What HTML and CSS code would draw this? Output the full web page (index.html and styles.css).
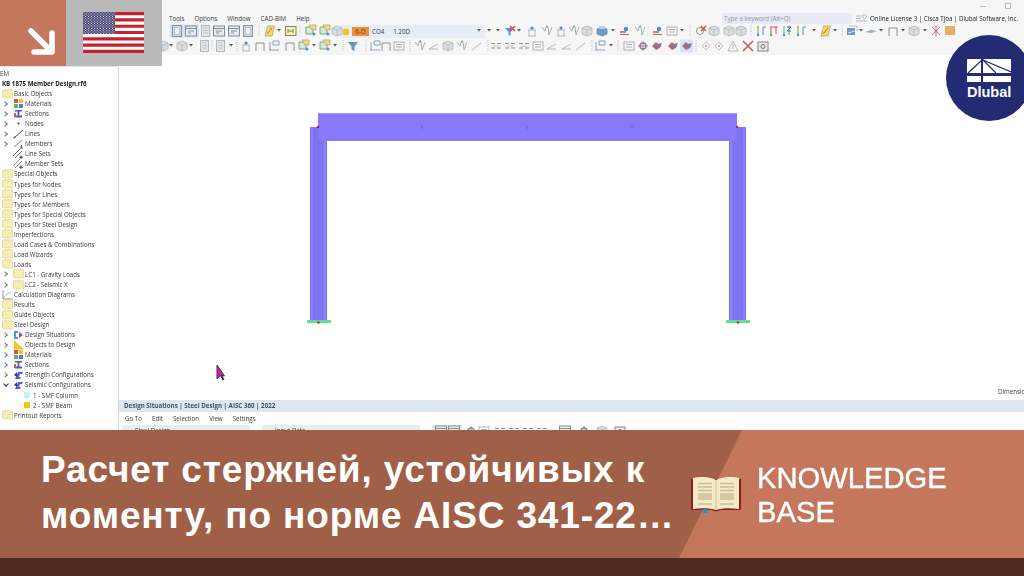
FILE: index.html
```html
<!DOCTYPE html>
<html lang="en">
<head>
    <meta charset="UTF-8">
    <meta name="viewport" content="width=device-width, initial-scale=1.0">
    <title>Knowledge Base</title>
    <link rel="stylesheet" href="styles.css">
</head>
<body>
    <svg class="defs" width="0" height="0">
        <defs>
            <pattern id="stars" width="3" height="2.4" patternUnits="userSpaceOnUse">
                <circle cx="1" cy="0.8" r="0.55" fill="#fff"/>
                <circle cx="2.5" cy="2" r="0.55" fill="#fff"/>
            </pattern>
            <g id="folder"><rect x="0.5" y="0.8" width="10.5" height="8" rx="1.2" fill="#f6edb0" stroke="#dcd08e" stroke-width="0.7"/></g>
            <g id="materials"><rect x="1" y="0" width="4" height="4" fill="#d9534f"/><rect x="6" y="0" width="4" height="4" fill="#f0c419"/><rect x="1" y="5" width="4" height="4" fill="#5cb85c"/><rect x="6" y="5" width="4" height="4" fill="#6a6fd8"/></g>
            <g id="sections"><path d="M2 1h7v1.6H6.4v4H9v1.8H2V6.6h2.6v-4H2z" fill="#5358b8"/><path d="M1 4h2v4H1z" fill="#d9534f"/></g>
            <g id="node"><circle cx="5.5" cy="4.5" r="1.1" fill="#8a2040"/></g>
            <g id="line"><path d="M1 9L10 1" stroke="#444" stroke-width="1"/><circle cx="1.5" cy="8.5" r="1" fill="#b0304a"/></g>
            <g id="member"><path d="M1 8L9 1" stroke="#4a9a9a" stroke-width="1"/><path d="M7 9h3M8.5 6v3" stroke="#444" stroke-width="0.9"/></g>
            <g id="lineset"><path d="M0 7L7 0M2 9L9 2" stroke="#555" stroke-width="0.9"/><path d="M8 6.5v3.5M6.2 8.2h3.6" stroke="#222" stroke-width="0.9"/></g>
            <g id="memberset"><path d="M0 7L7 0" stroke="#c06070" stroke-width="0.9"/><path d="M2 9L9 2" stroke="#666" stroke-width="0.9"/><path d="M8 6.5v3.5M6.2 8.2h3.6" stroke="#222" stroke-width="0.9"/></g>
            <g id="calc"><path d="M1 0v9h10" fill="none" stroke="#777" stroke-width="0.8"/><path d="M2 7l3-3 4-2" fill="none" stroke="#8fb0d0" stroke-width="0.7"/></g>
            <g id="design"><path d="M1 1h4v2H3v4h2v2H1z" fill="#3aa6d8"/><path d="M6 2l4 3-4 3z" fill="#c030c0"/></g>
            <g id="objects"><path d="M1 9.5V0l10 9.5z" fill="#efc92e"/></g>
            <g id="strength"><path d="M2 9l3-7h5l-1 2H7L6 7h2L7 9z" fill="#5a62c8"/><path d="M1 5l3-3v5z" fill="#2f3c90"/></g>

            <path id="dd" d="M0 0h4L2 2.4z" fill="#333"/>
            <path id="sep" d="M0 0v12" stroke="#bcbcbc" stroke-width="1" stroke-dasharray="1 1"/>
            <g id="pane"><rect x="0.5" y="0.5" width="9" height="11" fill="#cfd6df" stroke="#6b7888"/><rect x="2.5" y="2.5" width="5" height="7" fill="#eef1f5" stroke="#8b97a5" stroke-width="0.6"/></g>
            <g id="win"><rect x="0.5" y="1" width="11" height="10" fill="#e6e9ee" stroke="#66727f"/><path d="M1 3.5h10" stroke="#66727f"/><path d="M3 6h6M3 8h3" stroke="#555" stroke-width="0.8"/></g>
            <g id="page"><rect x="1.5" y="0.5" width="8" height="11" fill="#dfe2e6" stroke="#a3a9b0"/><path d="M3 3h5M3 5.5h5M3 8h5" stroke="#a3a9b0" stroke-width="0.7"/></g>
            <g id="yellow"><path d="M1 11l2.5-10h7L8 11z" fill="#f2d64b" stroke="#9b8a20" stroke-width="0.7"/><path d="M3 9l5-6" stroke="#c0392b"/></g>
            <g id="box"><rect x="0.5" y="1.5" width="10.5" height="9" fill="#f5efa8" stroke="#6d6a20"/><path d="M3 4v4M3 6h5M8 4v4" stroke="#3d7a3a"/></g>
            <g id="tri"><path d="M1 2h7v7H1z" fill="#d3e6d0" stroke="#47773f" stroke-width="0.8"/><path d="M4 0h7v5H7z" fill="#e8d77a" stroke="#8a7a20" stroke-width="0.6"/><circle cx="9" cy="9" r="1.5" fill="#3a76c4"/></g>
            <g id="cube"><path d="M1 3l5-2 5 2v6l-5 2-5-2z" fill="#d5d8dc" stroke="#a2a7ad" stroke-width="0.8"/><path d="M1 3l5 2 5-2M6 5v6" fill="none" stroke="#a2a7ad" stroke-width="0.7"/></g>
            <g id="cubeb"><path d="M1 4l5-2 5 2v5l-5 2-5-2z" fill="#4f86b8" stroke="#2f5e8a" stroke-width="0.7"/><path d="M3 1h6v3H3z" fill="#a7c7e4"/></g>
            <g id="stand"><path d="M2 11h8M3 11V5M9 11V5M2 5h8" fill="none" stroke="#9aa0a6" stroke-width="0.9"/><circle cx="6" cy="3" r="1.6" fill="#2f6fa8"/></g>
            <g id="vv"><path d="M1 2l3 4 1-4M7 2l1 8 3-8" fill="none" stroke="#8c9499" stroke-width="0.9"/><circle cx="6" cy="1.5" r="1" fill="#4e8b6c"/></g>
            <g id="frame"><path d="M2 11V3h8v8" fill="none" stroke="#777" stroke-width="1"/></g>
            <g id="frameb"><path d="M1 10h10M2 10V2M5 1h6v4H5z" fill="none" stroke="#5a7fa8" stroke-width="0.9"/></g>
            <g id="hatch"><rect x="1" y="2" width="10" height="8" fill="none" stroke="#9aa0a6"/><path d="M3 4.5h6M3 7h6" stroke="#9aa0a6"/></g>
            <g id="eq"><path d="M1 3.5h4M7 3.5h4M1 8h4M7 8h4" stroke="#777" stroke-width="1.1"/><path d="M3 6h6" stroke="#b5b5b5"/></g>
            <g id="slant"><path d="M1 9l9-5M1 9h9" fill="none" stroke="#9aa0a6" stroke-width="0.9"/></g>
            <g id="dash"><path d="M1 10L10 3" stroke="#a6abb0" stroke-width="1"/></g>
            <g id="funnel"><path d="M1 2h10L7.5 6.5V11l-3-1.500V6.500z" fill="#3d7eb4"/></g>
            <g id="funnelx"><path d="M1 3h9L6.500 7v4l-2-1V7z" fill="#3d7eb4"/><path d="M6 1l5 5M11 1L6 6" stroke="#d8202a" stroke-width="1.600"/></g>
            <g id="redx"><circle cx="5" cy="6" r="3.500" fill="none" stroke="#777"/><path d="M6 1l5 5M11 1L6 6" stroke="#d8202a" stroke-width="1.500"/></g>
            <g id="bigx"><path d="M1 1l10 10M11 1L1 11" stroke="#b8322c" stroke-width="1.500"/></g>
            <g id="ax1"><path d="M3 1v10M8 2h3" stroke="#2f9a4a" stroke-width="1"/><path d="M8 2v8" stroke="#2f6fc4"/><circle cx="3" cy="2" r="1.200" fill="#d9a520"/><circle cx="3" cy="10" r="1.200" fill="#2f6fc4"/></g>
            <g id="ax2"><path d="M2 2h8M3 2v9M8 2v7" fill="none" stroke="#c0392b" stroke-width="1"/><circle cx="3" cy="10" r="1.200" fill="#2f9a4a"/></g>
            <g id="ax3"><path d="M3 1v10M8 1v9" stroke="#2f9a4a"/><path d="M6 2h4L6 6h4" fill="none" stroke="#234a90"/><circle cx="3" cy="10" r="1.200" fill="#2f6fc4"/></g>
            <g id="linkr"><path d="M1 7h6" stroke="#c0392b" stroke-width="1.600"/><circle cx="7" cy="4" r="2.200" fill="#2f6fa8"/><path d="M1 9.500h9" stroke="#b04040"/></g>
            <g id="gear"><circle cx="6" cy="6" r="3" fill="none" stroke="#3c6ea8" stroke-width="1.400"/><path d="M6 1v10M1 6h10" stroke="#c0392b" stroke-width="0.8"/></g>
            <g id="blob"><path d="M1 6l4-4 2 2 4-1-2 5-4 2z" fill="#a8434f"/><path d="M3 6h7" stroke="#2f6fa8" stroke-width="1.500"/></g>
            <g id="stack"><path d="M1 3h8v7H1z" fill="#5c7fa5"/><path d="M3 1h8v5" fill="none" stroke="#9db6cf"/><path d="M2 8l7-2" stroke="#d5e1ee"/></g>
            <g id="plane"><path d="M0 7l6-2 6 1-6 2z" fill="#7e9ab5"/></g>
            <g id="net"><path d="M2 2l8 8M10 2L2 10M6 1v10" stroke="#c05050" stroke-width="0.900"/><circle cx="6" cy="6" r="1.500" fill="#777"/></g>
            <g id="camera"><rect x="1" y="2" width="10" height="9" fill="#e4e4e4" stroke="#666"/><circle cx="6" cy="6.500" r="2" fill="none" stroke="#555"/></g>
            <g id="ghost"><path d="M2 6l4-4 4 4-4 4z" fill="none" stroke="#b5babf"/><circle cx="6" cy="6" r="1" fill="#c77"/></g>
            <g id="warn"><path d="M6 1l5 10H1z" fill="none" stroke="#a5aaaf"/><path d="M6 4v5" stroke="#a5aaaf"/></g>
        </defs>
    </svg>

    <div class="app">
        <header class="top">
            <div class="titlebar"><span class="win-min"></span><span class="win-max"></span></div>
            <div class="menubar">
                <nav class="menu">
                    <span>Tools</span><span>Options</span><span>Window</span><span>CAD-BIM</span><span>Help</span>
                </nav>
                <div class="search">Type a keyword (Alt+Q)</div>
                <svg class="search-ico" width="12" height="8" viewBox="0 0 12 8"><path d="M0 2h6M0 4.500h5M0 7h11" stroke="#a9b7c6"/><circle cx="8.500" cy="2.500" r="1.800" fill="none" stroke="#a9b7c6"/></svg>
                <div class="license">Online License 3 | Cisca Tjoa | Dlubal Software, Inc.</div>
            </div>
            <div class="tools">
                <div class="combo"><i class="swatch"></i><b class="chip">6-O</b><span>CO4</span><span class="combo-val">1.20D</span></div>
                <svg class="tool-icons" viewBox="0 25 1024 30" width="1024" height="30">
                    <rect x="170" y="25.500" width="29" height="13" fill="#cfe2f7"/>
                    <rect x="680" y="40.500" width="13" height="13" fill="#cfe2f7"/>
                    <use href="#pane" x="172" y="26"/><use href="#win" x="185" y="26"/><use href="#page" x="200" y="26"/><use href="#win" x="213" y="26"/><use href="#win" x="228" y="26"/><use href="#pane" x="243" y="26"/>
                    <use href="#sep" x="259" y="26"/>
                    <use href="#yellow" x="264" y="26"/><use href="#dd" x="277" y="30"/><use href="#box" x="285" y="26"/>
                    <use href="#sep" x="300" y="26"/>
                    <use href="#tri" x="305" y="26"/><use href="#tri" x="319" y="26"/><use href="#cube" x="331" y="26"/>
                    <use href="#dd" x="477" y="30"/><use href="#dd" x="487" y="30"/><use href="#dd" x="496" y="30"/>
                    <use href="#funnelx" x="504" y="26"/><use href="#dd" x="517" y="30"/><use href="#stand" x="526" y="26"/><use href="#vv" x="541" y="26"/><use href="#stand" x="555" y="26"/><use href="#vv" x="568" y="26"/><use href="#cube" x="581" y="26"/><use href="#cubeb" x="596" y="26"/><use href="#dd" x="611" y="30"/><use href="#linkr" x="619" y="26"/><use href="#vv" x="634" y="26"/>
                    <use href="#sep" x="648" y="26"/>
                    <use href="#linkr" x="652" y="26"/><use href="#hatch" x="666" y="26"/><use href="#dd" x="680" y="30"/>
                    <use href="#sep" x="690" y="26"/>
                    <use href="#redx" x="695" y="26"/><use href="#cube" x="708" y="26"/><use href="#cube" x="723" y="26"/><use href="#cube" x="735" y="26"/>
                    <use href="#sep" x="751" y="26"/>
                    <use href="#ax1" x="755" y="26"/><use href="#ax2" x="768" y="26"/><use href="#ax3" x="781" y="26"/><use href="#ax1" x="795" y="26"/><use href="#dd" x="812" y="30"/><use href="#yellow" x="820" y="26"/><use href="#dd" x="833" y="30"/>
                    <use href="#sep" x="842" y="26"/>
                    <use href="#stack" x="846" y="26"/><use href="#dd" x="859" y="30"/><use href="#plane" x="865" y="26"/><use href="#dd" x="879" y="30"/><use href="#frame" x="887" y="26"/><use href="#dd" x="901" y="30"/><use href="#cube" x="908" y="26"/><use href="#dd" x="923" y="30"/><use href="#net" x="930" y="26"/>
                    <rect x="945" y="27" width="10" height="9" fill="#e8993f"/>

                    <use href="#cube" x="157" y="41"/><use href="#dd" x="169" y="45"/><use href="#cube" x="176" y="41"/><use href="#dd" x="189" y="45"/><use href="#page" x="199" y="41"/><use href="#sep" x="212" y="41"/>
                    <use href="#page" x="215" y="41"/><use href="#dd" x="229" y="45"/><use href="#sep" x="237" y="41"/>
                    <use href="#stand" x="240" y="41"/><use href="#frame" x="254" y="41"/><use href="#frameb" x="268" y="41"/><use href="#frame" x="284" y="41"/><use href="#tri" x="298" y="41"/><use href="#dd" x="312" y="45"/><use href="#tri" x="319" y="41"/><use href="#dd" x="333" y="45"/>
                    <use href="#sep" x="343" y="41"/><use href="#funnel" x="347" y="41"/><use href="#sep" x="366" y="41"/>
                    <use href="#frameb" x="369" y="41"/><use href="#frame" x="380" y="41"/><use href="#hatch" x="393" y="41"/><use href="#sep" x="410" y="41"/>
                    <use href="#vv" x="414" y="41"/><use href="#slant" x="428" y="41"/><use href="#cube" x="442" y="41"/><use href="#vv" x="456" y="41"/><use href="#dash" x="471" y="41"/><use href="#sep" x="488" y="41"/>
                    <use href="#eq" x="490" y="41"/><use href="#eq" x="504" y="41"/><use href="#eq" x="518" y="41"/><use href="#hatch" x="532" y="41"/><use href="#slant" x="546" y="41"/><use href="#slant" x="561" y="41"/><use href="#dash" x="575" y="41"/><use href="#sep" x="592" y="41"/>
                    <use href="#frameb" x="594" y="41"/><use href="#dd" x="609" y="45"/><use href="#sep" x="618" y="41"/>
                    <use href="#hatch" x="623" y="41"/><use href="#gear" x="637" y="41"/><use href="#blob" x="651" y="41"/><use href="#blob" x="667" y="41"/><use href="#blob" x="681" y="41"/><use href="#sep" x="696" y="41"/>
                    <use href="#ghost" x="700" y="41"/><use href="#ghost" x="713" y="41"/><use href="#warn" x="727" y="41"/><use href="#bigx" x="742" y="41"/><use href="#camera" x="757" y="41"/>
                </svg>
            </div>
        </header>

        <div class="work">
            <aside class="tree">
                <div class="row l0 cut">EM</div>
                <div class="row l0 file">KB 1875 Member Design.rf6</div>
                <div class="row l0"><svg class="ico"><use href="#folder"/></svg>Basic Objects</div>
                <div class="row l1"><i class="twig"></i><svg class="ico"><use href="#materials"/></svg>Materials</div>
                <div class="row l1"><i class="twig"></i><svg class="ico"><use href="#sections"/></svg>Sections</div>
                <div class="row l1"><i class="twig"></i><svg class="ico"><use href="#node"/></svg>Nodes</div>
                <div class="row l1"><i class="twig"></i><svg class="ico"><use href="#line"/></svg>Lines</div>
                <div class="row l1"><i class="twig"></i><svg class="ico"><use href="#member"/></svg>Members</div>
                <div class="row l1"><i class="no-twig"></i><svg class="ico"><use href="#lineset"/></svg>Line Sets</div>
                <div class="row l1"><i class="no-twig"></i><svg class="ico"><use href="#memberset"/></svg>Member Sets</div>
                <div class="row l0"><svg class="ico"><use href="#folder"/></svg>Special Objects</div>
                <div class="row l0"><svg class="ico"><use href="#folder"/></svg>Types for Nodes</div>
                <div class="row l0"><svg class="ico"><use href="#folder"/></svg>Types for Lines</div>
                <div class="row l0"><svg class="ico"><use href="#folder"/></svg>Types for Members</div>
                <div class="row l0"><svg class="ico"><use href="#folder"/></svg>Types for Special Objects</div>
                <div class="row l0"><svg class="ico"><use href="#folder"/></svg>Types for Steel Design</div>
                <div class="row l0"><svg class="ico"><use href="#folder"/></svg>Imperfections</div>
                <div class="row l0"><svg class="ico"><use href="#folder"/></svg>Load Cases &amp; Combinations</div>
                <div class="row l0"><svg class="ico"><use href="#folder"/></svg>Load Wizards</div>
                <div class="row l0"><svg class="ico"><use href="#folder"/></svg>Loads</div>
                <div class="row l1"><i class="twig"></i><svg class="ico"><use href="#folder"/></svg>LC1 - Gravity Loads</div>
                <div class="row l1"><i class="twig"></i><svg class="ico"><use href="#folder"/></svg>LC2 - Seismic X</div>
                <div class="row l0"><svg class="ico"><use href="#calc"/></svg>Calculation Diagrams</div>
                <div class="row l0"><svg class="ico"><use href="#folder"/></svg>Results</div>
                <div class="row l0"><svg class="ico"><use href="#folder"/></svg>Guide Objects</div>
                <div class="row l0"><svg class="ico"><use href="#folder"/></svg>Steel Design</div>
                <div class="row l1"><i class="twig"></i><svg class="ico"><use href="#design"/></svg>Design Situations</div>
                <div class="row l1"><i class="twig"></i><svg class="ico"><use href="#objects"/></svg>Objects to Design</div>
                <div class="row l1"><i class="twig"></i><svg class="ico"><use href="#materials"/></svg>Materials</div>
                <div class="row l1"><i class="twig"></i><svg class="ico"><use href="#sections"/></svg>Sections</div>
                <div class="row l1"><i class="twig"></i><svg class="ico"><use href="#strength"/></svg>Strength Configurations</div>
                <div class="row l1"><i class="twig open"></i><svg class="ico"><use href="#strength"/></svg>Seismic Configurations</div>
                <div class="row l2"><i class="dot cyan"></i>1 - SMF Column</div>
                <div class="row l2"><i class="dot amber"></i>2 - SMF Beam</div>
                <div class="row l0"><svg class="ico"><use href="#folder"/></svg>Printout Reports</div>
            </aside>

            <main class="main">
                <div class="view">
                    <svg class="frame" viewBox="119 55 905 345" width="905" height="345">
                        <rect x="310" y="127" width="17" height="195" fill="#7f73f4"/>
                        <rect x="729" y="127" width="17" height="195" fill="#7f73f4"/>
                        <path d="M312 127v195M325 127v195M731 127v195M744 127v195" stroke="#9a90fb" stroke-width="1"/>
                        <rect x="318" y="113" width="419" height="28" fill="#8679fb"/>
                        <path d="M318 113.500h419" stroke="#a39afc"/>
                        <circle cx="318" cy="127" r="1.300" fill="#e0103c"/>
                        <circle cx="737" cy="127" r="1.300" fill="#e0103c"/>
                        <path d="M422 126v3M527 126v3M632 126v3" stroke="#6a62e4" stroke-opacity="0.600" stroke-width="2"/>
                        <rect x="307" y="320" width="24" height="3" fill="#62e08c"/>
                        <rect x="726" y="320" width="24" height="3" fill="#62e08c"/>
                        <circle cx="318.500" cy="322.500" r="1.300" fill="#b03040"/>
                        <circle cx="738" cy="322.500" r="1.300" fill="#b03040"/>
                    </svg>
                    <svg class="pointer" width="13" height="18" viewBox="0 0 13 18">
                        <path d="M1 1v14l3.500-3.500 4 0.500z" fill="#d01fa0" stroke="#40304a" stroke-width="1"/>
                        <path d="M5 11l2.500 5" stroke="#40304a" stroke-width="2"/>
                    </svg>
                    <span class="dim">Dimensions</span>
                </div>
                <section class="panel">
                    <div class="panel-head">Design Situations | Steel Design | AISC 360 | 2022</div>
                    <nav class="panel-menu"><span>Go To</span><span>Edit</span><span>Selection</span><span>View</span><span>Settings</span></nav>
                    <div class="panel-tools">
                        <div class="panel-combo first">Steel Design</div>
                        <div class="panel-combo second">Input Data</div>
                        <svg class="panel-icons" width="200" height="13" viewBox="0 0 200 13">
                            <rect x="0" y="0" width="30" height="13" fill="#cfe2f7"/>
                            <use href="#win" x="3" y="0"/><use href="#win" x="16" y="0"/>
                            <use href="#gear" x="33" y="0"/><use href="#hatch" x="46" y="0"/><use href="#eq" x="62" y="0"/><use href="#eq" x="76" y="0"/><use href="#eq" x="90" y="0"/><use href="#eq" x="104" y="0"/><use href="#win" x="127" y="0"/><use href="#gear" x="146" y="0"/><use href="#cube" x="164" y="0"/><use href="#camera" x="182" y="0"/>
                        </svg>
                    </div>
                </section>
            </main>
        </div>
    </div>

    <div class="corner">
        <div class="corner-arrow">
            <svg width="66" height="66" viewBox="0 0 66 66">
                <path d="M31 31l21 21M34 52h18V33" fill="none" stroke="#fff" stroke-width="5.500" stroke-linecap="round" stroke-linejoin="round"/>
            </svg>
        </div>
        <div class="corner-flag">
            <svg width="61" height="41" viewBox="0 0 61 41">
                <rect width="61" height="41" fill="#fff"/>
                <path d="M0 1.600h61M0 7.900h61M0 14.200h61M0 20.500h61M0 26.800h61M0 33.100h61M0 39.400h61" stroke="#c8202f" stroke-width="3.150"/>
                <rect width="32" height="22" fill="#3c3b6e"/>
                <rect width="32" height="22" fill="url(#stars)"/>
            </svg>
        </div>
    </div>

    <div class="logo">
        <svg width="44" height="24" viewBox="0 0 44 24">
            <rect width="44" height="14" fill="#fff"/>
            <rect y="17" width="44" height="6" fill="#fff"/>
            <path d="M15 0v23" stroke="#232b72" stroke-width="2"/>
            <path d="M1 14L15 1M16 1l13 13M16 1l28 12" stroke="#232b72" stroke-width="1.200" fill="none"/>
        </svg>
        <span>Dlubal</span>
    </div>

    <footer class="banner">
        <div class="banner-main">
            <h1>Расчет стержней, устойчивых к<br>моменту, по норме AISC 341-22…</h1>
        </div>
        <div class="banner-side">
            <svg class="book" width="50" height="36" viewBox="0 0 50 36">
                <path d="M0 2h50v31H30l-5 1.500L20 33H0z" fill="#8f1f1c"/>
                <path d="M2 1C10-1 19 0 25 3c6-3 15-4 23-2v31c-8-1-17-1-23 1-6-2-15-2-23-1z" fill="#f3ebc6"/>
                <path d="M25 3v30" stroke="#d9cfa4" stroke-width="1.500"/>
                <path d="M7 6.500h14M7 10h14M29 6.500h14M29 10h14M7 13.500h14M29 13.500h14M7 27h14M29 27h14" stroke="#c9bd95" stroke-width="1.300"/>
                <path d="M7 16h14v7H7zM29 16h14v7H29z" fill="#d6c9a0"/>
                <rect x="12" y="32" width="4" height="4" fill="#0a9bd6"/>
            </svg>
            <div class="kb">KNOWLEDGE<br>BASE</div>
        </div>
    </footer>
</body>
</html>
```

FILE: styles.css
```css
* {
    box-sizing: border-box;
}
html, body {
    margin: 0;
    height: 100%;
}
body {
    position: relative;
    width: 1024px;
    height: 576px;
    overflow: hidden;
    background-color: #ffffff;
    font-family: 'Liberation Sans', Arial, sans-serif;
    display: flex;
    flex-direction: column;
}
.defs {
    position: absolute;
}

/* application behind the overlays */
.app {
    height: 430px;
    display: flex;
    flex-direction: column;
    font-family: 'Open Sans', 'Liberation Sans', sans-serif;
    font-size: 6.2px;
    color: #3a3a3a;
    filter: blur(0.45px);
}
.top {
    height: 55px;
    background-color: #f6f6f6;
    flex: none;
}
.titlebar {
    height: 12px;
    position: relative;
}
.win-min {
    position: absolute;
    left: 980px;
    top: 6px;
    width: 6px;
    height: 1px;
    background-color: #bbb;
}
.win-max {
    position: absolute;
    left: 1005px;
    top: 3px;
    width: 6px;
    height: 6px;
    border: 1px solid #bbb;
}
.menubar {
    height: 12px;
    display: flex;
    align-items: center;
}
.menu {
    display: flex;
    gap: 10px;
    margin-left: 169px;
    width: 553px;
}
.search {
    width: 130px;
    height: 11px;
    padding-left: 2px;
    line-height: 11px;
    color: #8f93a0;
    background-color: #e9ebf4;
}
.search-ico {
    margin-left: 4px;
    flex: none;
}
.license {
    margin-left: 2px;
    white-space: nowrap;
    color: #222;
}
.tools {
    position: relative;
    height: 31px;
}
.tool-icons {
    display: block;
    opacity: 0.8;
}
.combo {
    position: absolute;
    left: 340px;
    top: 1px;
    width: 145px;
    height: 13px;
    padding-left: 3px;
    display: flex;
    align-items: center;
    background-color: #e8ecf6;
}
.swatch {
    width: 6px;
    height: 6px;
    background-color: #f5c518;
}
.chip {
    margin-left: 3px;
    width: 17px;
    font-weight: 400;
    text-align: center;
    background-color: #e98f3f;
    color: #7a2f10;
}
.combo span {
    margin-left: 3px;
}
.combo .combo-val {
    margin-left: 9px;
}

.work {
    flex: 1;
    display: flex;
    min-height: 0;
}
.tree {
    width: 119px;
    margin-top: 11px;
    padding-top: 1.500px;
    background-color: #ffffff;
    border-top: 1px solid #dbe3ec;
    border-right: 1px solid #cfd9e4;
    flex: none;
    overflow: hidden;
}
.row {
    height: 10.05px;
    display: flex;
    align-items: center;
    white-space: nowrap;
}
.ico {
    width: 11px;
    height: 10px;
    flex: none;
    margin-right: 1px;
}
.l0 {
    padding-left: 2px;
}
.cut {
    padding-left: 0;
}
.file {
    padding-left: 2px;
    font-weight: 700;
    color: #222;
}
.l1 {
    padding-left: 3px;
}
.l2 {
    padding-left: 24px;
}
.twig, .no-twig {
    width: 10px;
    height: 6px;
    flex: none;
    position: relative;
}
.twig::before {
    content: "";
    position: absolute;
    left: 0;
    top: 1px;
    width: 3px;
    height: 3px;
    border-top: 1px solid #777;
    border-right: 1px solid #777;
    transform: rotate(45deg);
}
.twig.open::before {
    left: 1px;
    top: 0;
    transform: rotate(135deg);
    border-color: #333;
}
.dot {
    width: 6px;
    height: 6px;
    margin-right: 3px;
    flex: none;
}
.cyan {
    background-color: #c6f3f5;
}
.amber {
    background-color: #f2c511;
}

.main {
    flex: 1;
    min-width: 0;
    display: flex;
    flex-direction: column;
}
.view {
    position: relative;
    height: 345px;
    flex: none;
    overflow: hidden;
}
.frame {
    position: absolute;
    left: 0;
    top: 0;
}
.pointer {
    position: absolute;
    left: 97px;
    top: 309px;
}
.dim {
    position: absolute;
    left: 879px;
    top: 332px;
    white-space: nowrap;
}
.panel {
    flex: 1;
    overflow: hidden;
    min-height: 0;
}
.panel-head {
    height: 12px;
    line-height: 12px;
    padding-left: 5px;
    font-weight: 700;
    color: #44515f;
    background-color: #dde6f1;
}
.panel-menu {
    height: 12px;
    display: flex;
    align-items: center;
    gap: 10px;
    padding-left: 6px;
}
.panel-tools {
    display: flex;
    gap: 12px;
    padding-left: 3px;
    height: 13px;
    margin-top: 1px;
}
.panel-combo {
    height: 13px;
    padding-left: 13px;
    line-height: 12px;
    background-color: #e8ecf6;
}
.panel-combo.first {
    width: 128px;
}
.panel-combo.second {
    width: 158px;
}
.panel-icons {
    flex: none;
    opacity: 0.8;
}

/* overlays */
.corner {
    position: absolute;
    left: 0;
    top: 0;
    display: flex;
    height: 66px;
}
.corner-arrow {
    width: 66px;
    background-color: #c4775c;
}
.corner-arrow svg {
    display: block;
}
.corner-flag {
    width: 96px;
    padding: 12px 0 0 17px;
    background-color: #b9b9b9;
}
.corner-flag svg {
    display: block;
}
.logo {
    position: absolute;
    left: 946px;
    top: 35px;
    width: 86px;
    height: 86px;
    padding: 24px 0 0 21px;
    border-radius: 50%;
    background-color: #232b72;
    color: #ffffff;
}
.logo svg {
    display: block;
}
.logo span {
    display: block;
    font-size: 14.5px;
    font-weight: 700;
    line-height: 16px;
    margin-top: 1px;
}

.banner {
    height: 146px;
    flex: none;
    display: flex;
    background-color: #a05f47;
    border-bottom: 18px solid #4f2a1e;
}
.banner-main {
    width: 679px;
    padding: 17px 0 0 41px;
    flex: none;
}
.banner-main h1 {
    margin: 0;
    font-size: 37px;
    line-height: 46px;
    letter-spacing: 0.85px;
    font-weight: 700;
    color: #ffffff;
    white-space: nowrap;
}
.banner-side {
    position: relative;
    flex: 1;
    display: flex;
    align-items: flex-start;
}
.banner-side::before {
    content: "";
    position: absolute;
    inset: 0;
    background-color: #c4775c;
    clip-path: polygon(63px 0, 100% 0, 100% 100%, 0 100%);
}
.book {
    position: relative;
    margin: 47px 0 0 12px;
    flex: none;
}
.kb {
    position: relative;
    margin: 31px 0 0 16px;
    font-size: 29.2px;
    line-height: 34px;
    color: #ffffff;
    font-weight: 400;
    -webkit-text-stroke: 0.4px #fff;
}
```
